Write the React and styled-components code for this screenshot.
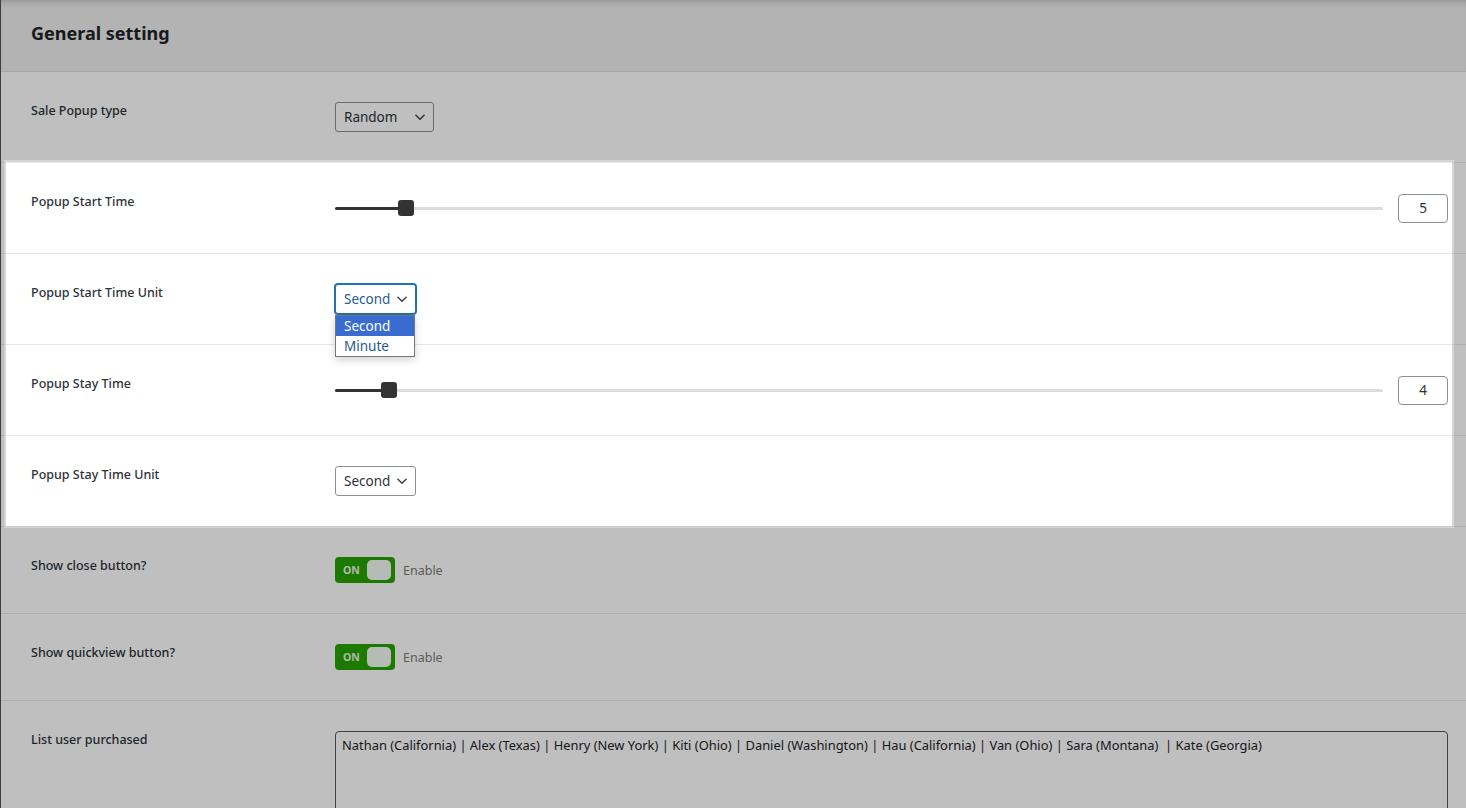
import styled, { createGlobalStyle } from "styled-components";

const Global = createGlobalStyle`
  html, body { margin: 0; padding: 0; background: #fff; }
  body { font-family: "Noto Sans", "Open Sans", sans-serif; overflow: hidden; }
`;

const Page = styled.div`
  width: 1466px;
  height: 808px;
  overflow: hidden;
  position: relative;
  background: #fff;
  border-left: 1px solid #3c3c3c;
  box-sizing: border-box;
`;

const Header = styled.div`
  height: 72px;
  box-sizing: border-box;
  background: #efefef;
  border-bottom: 1px solid #dcdcdc;
  box-shadow: inset 0 6px 6px -4px rgba(0, 0, 0, 0.18);
  display: flex;
  align-items: center;
  padding: 0 0 5px 30px;
  h2 {
    margin: 0;
    font-size: 18px;
    font-weight: 700;
    color: #1d2327;
  }
`;

const Row = styled.div`
  display: grid;
  grid-template-columns: 304px 1fr;
  height: ${(p) => p.$h || 91}px;
  box-sizing: border-box;
  padding: 30px 18px 0 30px;
  border-bottom: 1px solid #e8e8e8;
  background: #fff;
`;

const Label = styled.div`
  font-size: 12.5px;
  line-height: 18px;
  font-weight: 500;
  color: #2c3338;
`;

const Control = styled.div`
  position: relative;
  display: flex;
  align-items: center;
  height: ${(p) => p.$h || 30}px;
  gap: 15px;
`;

const Group = styled.div`
  position: relative;
`;

const Spotlight = styled.div`
  position: absolute;
  top: -1px;
  bottom: 1px;
  left: 5px;
  right: 14px;
  z-index: 10;
  pointer-events: none;
  box-shadow: 0 0 0 2px rgba(255, 255, 255, 0.35), 0 0 0 9999px rgba(0, 0, 0, 0.25);
`;

const SelectBox = styled.div`
  display: flex;
  align-items: center;
  justify-content: space-between;
  box-sizing: border-box;
  width: ${(p) => p.$w}px;
  height: 30px;
  padding: 0 6px 0 8px;
  border: 1px solid ${(p) => (p.$focus ? "#2271b1" : "#8c8f94")};
  box-shadow: ${(p) => (p.$focus ? "0 0 0 1px #2271b1" : "none")};
  border-radius: 3px;
  background: #fff;
  font-size: 13.5px;
  color: ${(p) => (p.$focus ? "#2a5a8a" : "#2c3338")};
  svg { flex: none; }
`;

const Options = styled.div`
  position: absolute;
  top: 31px;
  left: 0;
  width: 80px;
  box-sizing: border-box;
  border: 1px solid #767676;
  background: #fff;
  box-shadow: 0 3px 8px rgba(0, 0, 0, 0.18);
  z-index: 20;
`;

const Option = styled.div`
  height: 20px;
  line-height: 20px;
  padding-left: 8px;
  font-size: 13.5px;
  background: ${(p) => (p.$active ? "#3a6bd1" : "#fff")};
  color: ${(p) => (p.$active ? "#fff" : "#2a5a8a")};
`;

const Track = styled.div`
  position: relative;
  flex: 1;
  height: 3px;
  border-radius: 2px;
  background: #dcdcdc;
`;

const Fill = styled.div`
  position: absolute;
  left: 0;
  top: 0;
  bottom: 0;
  border-radius: 2px;
  background: #333;
`;

const Thumb = styled.div`
  position: absolute;
  top: -7px;
  width: 16px;
  height: 16px;
  border-radius: 3px;
  background: #333;
`;

const NumberBox = styled.div`
  width: 50px;
  height: 29px;
  box-sizing: border-box;
  border: 1px solid #8c8f94;
  border-radius: 4px;
  display: flex;
  align-items: center;
  justify-content: center;
  font-size: 13.5px;
  color: #2c3338;
`;

const Toggle = styled.div`
  position: relative;
  width: 60px;
  height: 26px;
  border-radius: 4px;
  background: #26a300;
  box-sizing: border-box;
  display: flex;
  align-items: center;
  justify-content: space-between;
  padding: 0 4px 0 8px;
  span {
    font-size: 10.5px;
    font-weight: 700;
    color: #fff;
    opacity: 0.9;
  }
  i {
    width: 24px;
    height: 20px;
    border-radius: 5px;
    background: #fff;
    opacity: 0.95;
  }
`;

const Hint = styled.span`
  font-size: 12.5px;
  color: #7a7a7a;
  margin-left: -7px;
`;

const TextBox = styled.div`
  box-sizing: border-box;
  height: 120px;
  border: 1px solid #50575e;
  border-radius: 4px;
  padding: 4px 6px;
  font-size: 12.9px;
  line-height: 18px;
  color: #1d2327;
  white-space: pre;
`;

const Chevron = () => (
  <svg width="14" height="14" viewBox="0 0 24 24" fill="none" stroke="#3c434a" strokeWidth="2.6" strokeLinecap="round" strokeLinejoin="round">
    <path d="M5 9l7 7 7-7" />
  </svg>
);

const Select = ({ value, width, focus, open }) => (
  <Control>
    <SelectBox $w={width} $focus={focus}>
      {value}
      <Chevron />
    </SelectBox>
    {open && (
      <Options>
        <Option $active>Second</Option>
        <Option>Minute</Option>
      </Options>
    )}
  </Control>
);

const Slider = ({ value, pct }) => (
  <Control>
    <Track>
      <Fill style={{ width: `calc(${pct}% + 8px)` }} />
      <Thumb style={{ left: `${pct}%` }} />
    </Track>
    <NumberBox>{value}</NumberBox>
  </Control>
);

const Switch = () => (
  <Control $h={26}>
    <Toggle>
      <span>ON</span>
      <i />
    </Toggle>
    <Hint>Enable</Hint>
  </Control>
);

export default function App() {
  return (
    <Page>
      <Global />
      <Header>
        <h2>General setting</h2>
      </Header>
      <Row>
        <Label>Sale Popup type</Label>
        <Select value="Random" width={99} />
      </Row>
      <Group>
        <Spotlight />
        <Row>
          <Label>Popup Start Time</Label>
          <Slider value={5} pct={6.0} />
        </Row>
        <Row>
          <Label>Popup Start Time Unit</Label>
          <Select value="Second" width={81} focus open />
        </Row>
        <Row>
          <Label>Popup Stay Time</Label>
          <Slider value={4} pct={4.4} />
        </Row>
        <Row>
          <Label>Popup Stay Time Unit</Label>
          <Select value="Second" width={81} />
        </Row>
      </Group>
      <Row $h={87}>
        <Label>Show close button?</Label>
        <Switch />
      </Row>
      <Row $h={87}>
        <Label>Show quickview button?</Label>
        <Switch />
      </Row>
      <Row $h={140}>
        <Label>List user purchased</Label>
        <TextBox>
          Nathan (California) | Alex (Texas) | Henry (New York) | Kiti (Ohio) | Daniel (Washington) | Hau (California) | Van (Ohio) | Sara (Montana)  | Kate (Georgia)
        </TextBox>
      </Row>
    </Page>
  );
}
